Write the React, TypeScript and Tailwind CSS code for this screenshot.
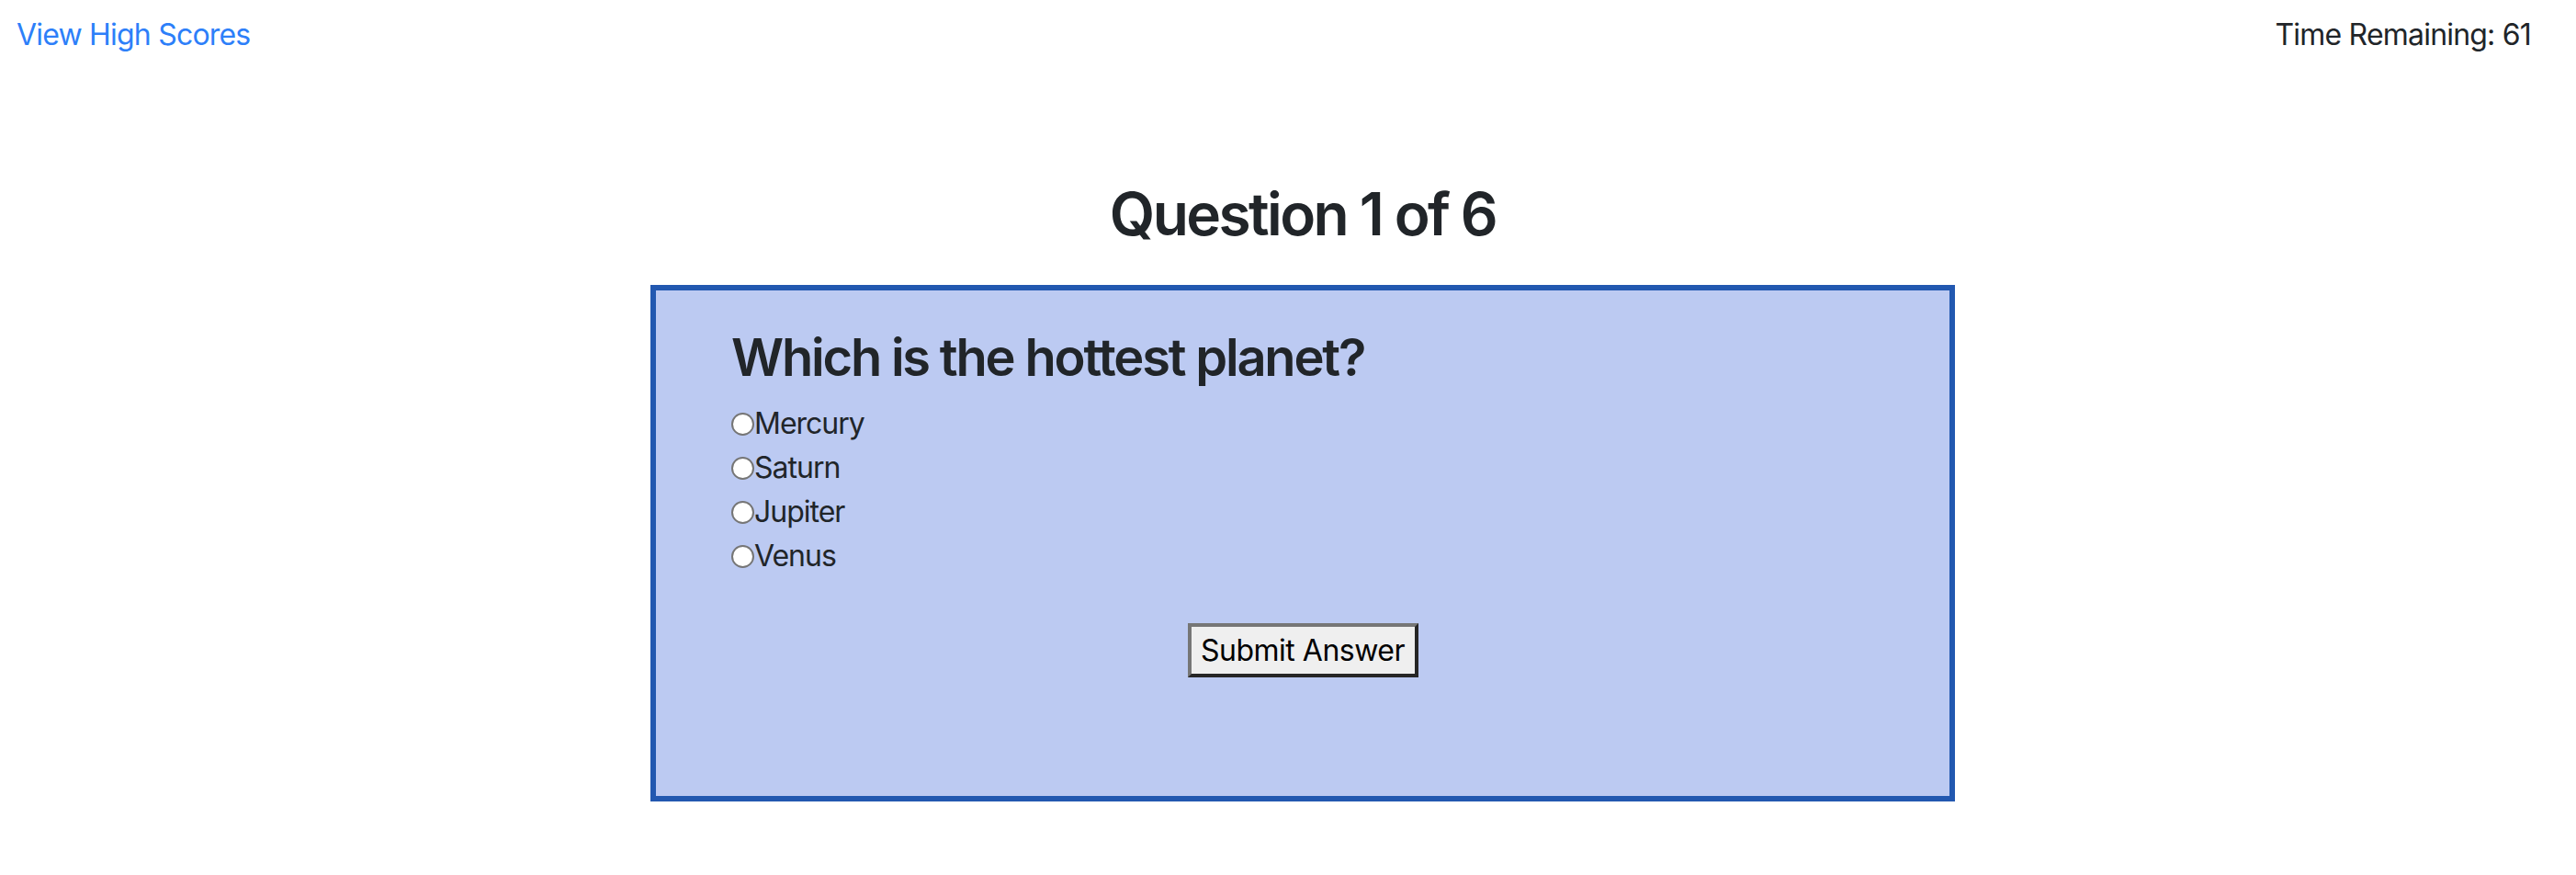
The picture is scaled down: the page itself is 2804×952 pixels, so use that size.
import { useState } from 'react';

const ANSWERS = ['Mercury', 'Saturn', 'Jupiter', 'Venus'];

export default function App() {
  const [picked, setPicked] = useState<string | null>(null);

  return (
    <div className="min-h-[952px] w-full bg-white text-[#212529] font-['Inter','Noto_Sans',sans-serif]">
      {/* top bar */}
      <div className="flex items-start justify-between pl-[18px] pr-[49px] pt-[14px] text-[32px] leading-[48px] tracking-[-0.8px]">
        <a href="#" className="text-[#2d7ff9]">View High Scores</a>
        <span>Time Remaining: 61</span>
      </div>

      <div className="pl-[32px]">
        <div className="mx-auto w-[1420px]">
          <h2 className="mt-[132px] text-center text-[64px] font-semibold leading-[77px] tracking-[-2.6px]">
            Question 1 of 6
          </h2>

          <div className="mt-[39px] h-[562px] border-[6px] border-[#2258b0] bg-[#bccaf2] pl-[82px] pt-[40px]">
            <h3 className="text-[56px] font-semibold leading-[67px] tracking-[-2.2px]">
              Which is the hottest planet?
            </h3>
            <div className="mt-[14px] flex flex-col">
              {ANSWERS.map((answer) => (
                <label key={answer} className="flex h-[48px] cursor-pointer items-center text-[32px] leading-[48px] tracking-[-1px]">
                  <input
                    type="radio"
                    name="answer"
                    value={answer}
                    checked={picked === answer}
                    onChange={() => setPicked(answer)}
                    className="m-0 h-[25px] w-[25px] shrink-0 appearance-none rounded-full border-2 border-[#767676] bg-white checked:border-[7px] checked:border-[#2d7ff9]"
                  />
                  <span>{answer}</span>
                </label>
              ))}
            </div>
            <div className="mt-[49px] flex justify-center pr-[82px]">
              <button className="h-[59px] w-[251px] border-4 border-t-[#767676] border-l-[#767676] border-b-[#262626] border-r-[#262626] bg-[#efefef] text-[32px] tracking-[-0.5px] text-black">
                Submit Answer
              </button>
            </div>
          </div>
        </div>
      </div>
    </div>
  );
}
